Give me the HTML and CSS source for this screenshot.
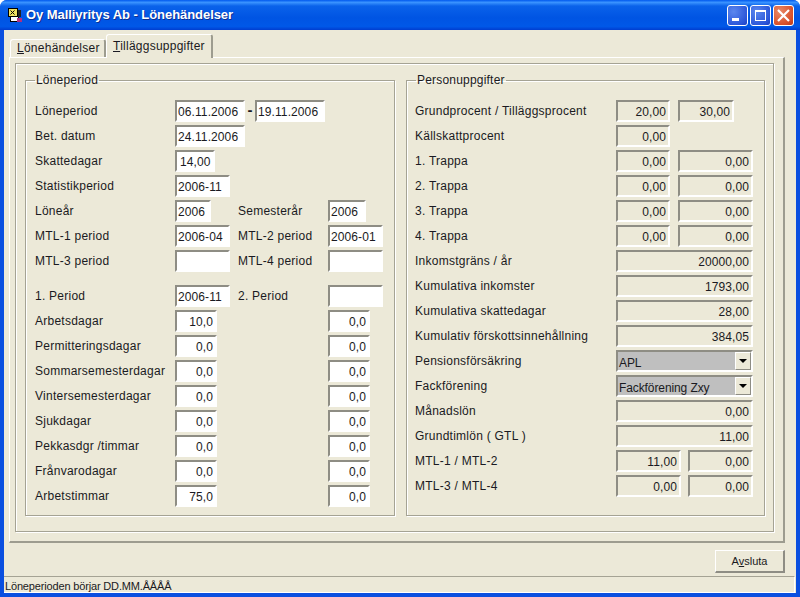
FILE: index.html
```html
<!DOCTYPE html>
<html lang="sv">
<head>
<meta charset="utf-8">
<title>Oy Malliyritys Ab - Lönehändelser</title>
<link rel="stylesheet" href="styles.css">
</head>
<body>
<div class="window">
  <header class="titlebar">
    <svg class="appicon" viewBox="0 0 16 16" width="16" height="16"><rect x="1.5" y="1.5" width="9" height="8" fill="#f0e060" stroke="#000"/><path d="M3.5 3.5l4 4M7.5 3.5l-4 4" stroke="#000"/><rect x="3.5" y="9.5" width="8" height="5" fill="#fff" stroke="#000"/><rect x="10" y="11" width="5" height="4" fill="#b03080"/><rect x="11" y="3" width="3" height="7" fill="#222"/></svg>
    <span class="title">Oy Malliyritys Ab - Lönehändelser</span>
    <div class="controls">
      <div class="ctl"><svg viewBox="0 0 21 21" width="21" height="21"><rect x="5" y="13" width="7" height="3" fill="#fff"/></svg></div>
      <div class="ctl"><svg viewBox="0 0 21 21" width="21" height="21"><rect x="5.5" y="5.5" width="10" height="10" fill="none" stroke="#fff"/><rect x="5" y="5" width="11" height="2" fill="#fff"/></svg></div>
      <div class="ctl close"><svg viewBox="0 0 21 21" width="21" height="21"><path d="M5 5l11 11M16 5L5 16" stroke="#fff" stroke-width="2.2"/></svg></div>
    </div>
  </header>
  <main class="client">
    <div class="tabs">
      <div class="tab"><u>L</u>önehändelser</div>
      <div class="tab active"><u>T</u>illäggsuppgifter</div>
    </div>
    <div class="page">
      <div class="inner">
        <fieldset class="group left">
          <legend>Löneperiod</legend>
          <div class="row"><span class="lbl">Löneperiod</span><div class="pair"><div class="f w70">06.11.2006</div><b class="dash">-</b><div class="f w70">19.11.2006</div></div></div>
          <div class="row"><span class="lbl">Bet. datum</span><div class="f w70">24.11.2006</div></div>
          <div class="row"><span class="lbl">Skattedagar</span><div class="f w40 tight">14,00</div></div>
          <div class="row"><span class="lbl">Statistikperiod</span><div class="f w55">2006-11</div></div>
          <div class="row"><span class="lbl">Löneår</span><div class="f w36">2006</div><span class="lbl">Semesterår</span><div class="f w38">2006</div></div>
          <div class="row"><span class="lbl">MTL-1 period</span><div class="f w55">2006-04</div><span class="lbl">MTL-2 period</span><div class="f w55">2006-01</div></div>
          <div class="row"><span class="lbl">MTL-3 period</span><div class="f w55"></div><span class="lbl">MTL-4 period</span><div class="f w55"></div></div>
          <div class="row gap"><span class="lbl">1. Period</span><div class="f w55">2006-11</div><span class="lbl">2. Period</span><div class="f w55"></div></div>
          <div class="row"><span class="lbl">Arbetsdagar</span><div class="f w42 num">10,0</div><span></span><div class="f w42 num">0,0</div></div>
          <div class="row"><span class="lbl">Permitteringsdagar</span><div class="f w42 num">0,0</div><span></span><div class="f w42 num">0,0</div></div>
          <div class="row"><span class="lbl">Sommarsemesterdagar</span><div class="f w42 num">0,0</div><span></span><div class="f w42 num">0,0</div></div>
          <div class="row"><span class="lbl">Vintersemesterdagar</span><div class="f w42 num">0,0</div><span></span><div class="f w42 num">0,0</div></div>
          <div class="row"><span class="lbl">Sjukdagar</span><div class="f w42 num">0,0</div><span></span><div class="f w42 num">0,0</div></div>
          <div class="row"><span class="lbl">Pekkasdgr /timmar</span><div class="f w42 num">0,0</div><span></span><div class="f w42 num">0,0</div></div>
          <div class="row"><span class="lbl">Frånvarodagar</span><div class="f w42 num">0,0</div><span></span><div class="f w42 num">0,0</div></div>
          <div class="row"><span class="lbl">Arbetstimmar</span><div class="f w42 num">75,0</div><span></span><div class="f w42 num">0,0</div></div>
        </fieldset>
        <fieldset class="group right">
          <legend>Personuppgifter</legend>
          <div class="rrow"><span class="lbl rl">Grundprocent / Tilläggsprocent</span><div class="f ro num w54">20,00</div><div class="f ro num w56 ml8">30,00</div></div>
          <div class="rrow"><span class="lbl rl">Källskattprocent</span><div class="f ro num w54">0,00</div></div>
          <div class="rrow"><span class="lbl rl">1. Trappa</span><div class="f ro num w54">0,00</div><div class="f ro num w75 ml8">0,00</div></div>
          <div class="rrow"><span class="lbl rl">2. Trappa</span><div class="f ro num w54">0,00</div><div class="f ro num w75 ml8">0,00</div></div>
          <div class="rrow"><span class="lbl rl">3. Trappa</span><div class="f ro num w54">0,00</div><div class="f ro num w75 ml8">0,00</div></div>
          <div class="rrow"><span class="lbl rl">4. Trappa</span><div class="f ro num w54">0,00</div><div class="f ro num w75 ml8">0,00</div></div>
          <div class="rrow"><span class="lbl rl">Inkomstgräns / år</span><div class="f ro num w137">20000,00</div></div>
          <div class="rrow"><span class="lbl rl">Kumulativa inkomster</span><div class="f ro num w137">1793,00</div></div>
          <div class="rrow"><span class="lbl rl">Kumulativa skattedagar</span><div class="f ro num w137">28,00</div></div>
          <div class="rrow"><span class="lbl rl">Kumulativ förskottsinnehållning</span><div class="f ro num w137">384,05</div></div>
          <div class="rrow"><span class="lbl rl">Pensionsförsäkring</span><div class="f combo w137"><span class="cv">APL</span><span class="arrow"></span></div></div>
          <div class="rrow"><span class="lbl rl">Fackförening</span><div class="f combo w137"><span class="cv">Fackförening Zxy</span><span class="arrow"></span></div></div>
          <div class="rrow"><span class="lbl rl">Månadslön</span><div class="f ro num w137">0,00</div></div>
          <div class="rrow"><span class="lbl rl">Grundtimlön ( GTL )</span><div class="f ro num w137">11,00</div></div>
          <div class="rrow"><span class="lbl rl">MTL-1 / MTL-2</span><div class="f ro num w65">11,00</div><div class="f ro num w65 ml7">0,00</div></div>
          <div class="rrow"><span class="lbl rl">MTL-3 / MTL-4</span><div class="f ro num w65">0,00</div><div class="f ro num w65 ml7">0,00</div></div>
        </fieldset>
      </div>
    </div>
    <div class="actions"><button class="btn" type="button">A<u>v</u>sluta</button></div>
    <footer class="status">Löneperioden börjar DD.MM.ÅÅÅÅ</footer>
  </main>
</div>
</body>
</html>
```
FILE: styles.css
```css
* { box-sizing: border-box; }
html, body { margin: 0; height: 100%; background: #fff; }
body { font: 12px/14px "Liberation Sans", Arial, sans-serif; color: #1a1a22; overflow: hidden; }
.window { width: 800px; height: 597px; display: flex; flex-direction: column; background: #0a4fe0; border-radius: 7px 7px 0 0; overflow: hidden; }
.titlebar { height: 30px; flex: none; display: flex; align-items: center; padding: 0 6px 0 7px; background: linear-gradient(#0058ee 0, #3a93ff 8%, #0a62ea 20%, #0054e3 60%, #0058e8 88%, #003dd0 100%); }
.appicon { flex: none; }
.title { margin-left: 3px; font-weight: 700; font-size: 13px; letter-spacing: -.06px; color: #fff; text-shadow: 1px 1px 0 #0f2f90; white-space: nowrap; }
.controls { margin-left: auto; display: flex; gap: 2px; }
.ctl { width: 21px; height: 21px; border: 1px solid #fff; border-radius: 3px; background: radial-gradient(circle at 30% 30%, #5b87ee, #2a55d8 75%, #1c3fc0); }
.ctl svg { display: block; margin: -1px; }
.ctl.close { background: radial-gradient(circle at 30% 30%, #e88a68, #d9502a 70%, #b83a1c); }
.client { flex: 1; margin: 0 4px 4px; background: #ece9d8; display: flex; flex-direction: column; min-height: 0; }
.tabs { height: 27px; padding: 5px 0 0 6px; display: flex; align-items: flex-end; position: relative; z-index: 1; letter-spacing: .25px; }
.tab { height: 18px; width: 96px; padding: 1px 0 0 6px; border: 1px solid #fff; border-bottom: 0; border-right: 2px solid #9d9c8f; border-radius: 3px 3px 0 0; white-space: nowrap; }
.tab.active { height: 24px; width: 107px; margin-bottom: -1px; padding: 4px 0 0 6px; background: #ece9d8; }
.page { width: 776px; height: 486px; flex: none; margin-left: 5px; padding: 5px 9px 9px 5px; border: 1px solid #fff; border-right: 2px solid #9d9c8f; border-bottom: 2px solid #9d9c8f; }
.inner { height: 100%; display: flex; gap: 11px; padding: 9px 9px 15px 9px; border: 1px solid #a5a394; box-shadow: inset 1px 1px 0 #fff, 1px 1px 0 #fff; }
.group { flex: none; margin: 0; padding: 13px 0 0 9px; border: 1px solid #a5a394; box-shadow: inset 1px 1px 0 #fff, 1px 1px 0 #fff; min-width: 0; }
.group.left { width: 370px; }
.group.right { width: 359px; padding-left: 8px; }
legend { margin: 0; padding: 0 1px; height: 14px; letter-spacing: .2px; }
.group.right legend { margin-left: 1px; }
.row { height: 25px; display: grid; grid-template-columns: 140px 63px 90px 1fr; align-items: start; justify-items: start; }
.rrow { height: 25px; display: flex; align-items: flex-start; }
.row.gap { margin-top: 10px; }
.lbl { padding-top: 4px; white-space: nowrap; letter-spacing: .25px; }
.rl { width: 201px; flex: none; }
.f { height: 22px; flex: none; padding: 3px 1px 0 1px; background: #fff; border: 2px solid #fff; border-top-color: #8e8d84; border-left-color: #8e8d84; white-space: nowrap; overflow: hidden; line-height: 14px; letter-spacing: .1px; }
.num { text-align: right; padding-right: 2px; }
.tight { padding-left: 3px; }
.ro { background: #ece9d8; }
.w70 { width: 70px; } .w40 { width: 40px; } .w55 { width: 55px; } .w36 { width: 36px; } .w38 { width: 38px; } .w42 { width: 42px; }
.pair { display: flex; align-items: flex-start; }
.dash { width: 10px; text-align: center; padding-top: 3px; font-size: 15px; }
.w54 { width: 54px; } .w56 { width: 56px; } .w75 { width: 75px; } .w65 { width: 65px; } .w137 { width: 137px; }
.ml8 { margin-left: 8px; } .ml7 { margin-left: 7px; }
.combo { display: flex; justify-content: space-between; padding: 0; background: #bfbfbf; }
.cv { padding: 4px 0 0 1px; letter-spacing: -.1px; }
.arrow { width: 16px; height: 18px; background: #ece9d8; border: 1px solid #fff; border-right-color: #8e8d84; border-bottom-color: #8e8d84; position: relative; }
.arrow::after { content: ""; position: absolute; left: 3px; top: 6px; border: 4px solid transparent; border-top: 4px solid #000; border-bottom: 0; }
.actions { flex: 1; display: flex; justify-content: flex-end; align-items: flex-start; padding: 7px 7px 0 0; }
.btn { width: 70px; height: 23px; margin-right: 4px; font: inherit; font-size: 11px; color: inherit; background: #ece9d8; border: 1px solid #fff; border-right: 2px solid #8e8d84; border-bottom: 2px solid #8e8d84; padding: 0; }
.status { height: 17px; flex: none; padding: 2px 0 0 1px; margin-right: 1px; font-size: 11px; letter-spacing: -.16px; border-top: 1px solid #a5a394; border-bottom: 1px solid #fff; border-right: 1px solid #fff; white-space: nowrap; }
```
